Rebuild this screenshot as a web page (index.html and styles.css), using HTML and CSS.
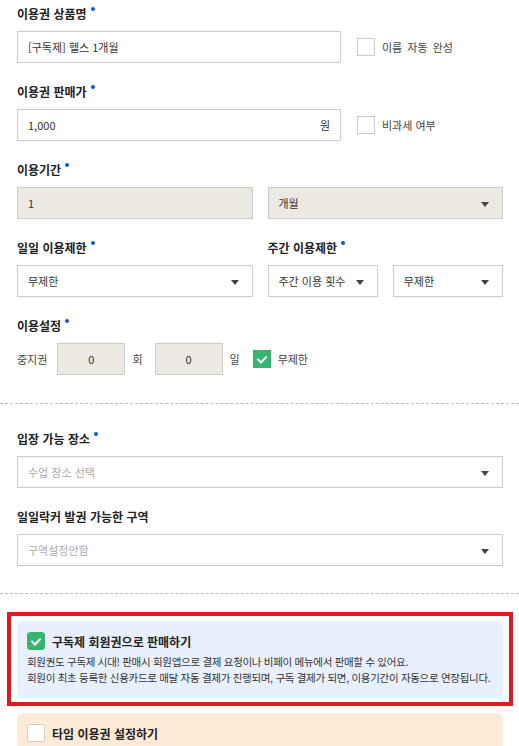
FILE: index.html
```html
<!DOCTYPE html>
<html lang="ko">
<head>
    <meta charset="UTF-8">
    <meta name="viewport" content="width=device-width, initial-scale=1.0">
    <title>이용권 설정</title>
    <link rel="stylesheet" href="styles.css">
</head>
<body>
    <form class="ticket-form">
        <div class="field">
            <label class="field-label">이용권 상품명<span class="req"></span></label>
            <div class="row-split">
                <input class="text-input" type="text" value="[구독제] 헬스 1개월">
                <label class="check wide"><span class="box"></span>이름 자동 완성</label>
            </div>
        </div>

        <div class="field">
            <label class="field-label">이용권 판매가<span class="req"></span></label>
            <div class="row-split">
                <div class="text-input price">
                    <span>1,000</span>
                    <span>원</span>
                </div>
                <label class="check"><span class="box"></span>비과세 여부</label>
            </div>
        </div>

        <div class="field">
            <label class="field-label">이용기간<span class="req"></span></label>
            <div class="row-half">
                <div class="text-input disabled">1</div>
                <div class="select disabled">개월<span class="caret"></span></div>
            </div>
        </div>

        <div class="row-half">
            <div class="field">
                <label class="field-label">일일 이용제한<span class="req"></span></label>
                <div class="select">무제한<span class="caret"></span></div>
            </div>
            <div class="field">
                <label class="field-label">주간 이용제한<span class="req"></span></label>
                <div class="row-half">
                    <div class="select">주간 이용 횟수<span class="caret"></span></div>
                    <div class="select">무제한<span class="caret"></span></div>
                </div>
            </div>
        </div>

        <div class="field">
            <label class="field-label">이용설정<span class="req"></span></label>
            <div class="usage-row">
                <span class="usage-name">중지권</span>
                <div class="num-input">0</div>
                <span class="unit">회</span>
                <div class="num-input">0</div>
                <span class="unit">일</span>
                <label class="check"><span class="box on"></span>무제한</label>
            </div>
        </div>

        <hr class="divider">

        <div class="field">
            <label class="field-label">입장 가능 장소<span class="req"></span></label>
            <div class="select placeholder">수업 장소 선택<span class="caret"></span></div>
        </div>

        <div class="field">
            <label class="field-label">일일락커 발권 가능한 구역</label>
            <div class="select placeholder">구역설정안함<span class="caret"></span></div>
        </div>

        <hr class="divider last">

        <div class="option-box blue highlighted">
            <label class="option-title"><span class="box on big"></span>구독제 회원권으로 판매하기</label>
            <p class="option-desc">
                회원권도 구독제 시대! 판매시 회원앱으로 결제 요청이나 비페이 메뉴에서 판매할 수 있어요.<br>
                회원이 최초 등록한 신용카드로 매달 자동 결제가 진행되며, 구독 결제가 되면, 이용기간이 자동으로 연장됩니다.
            </p>
        </div>

        <div class="option-box orange">
            <label class="option-title"><span class="box big"></span>타임 이용권 설정하기</label>
        </div>
    </form>
</body>
</html>
```

FILE: styles.css
```css
body {
    margin: 0;
    font-family: "Noto Sans CJK KR", "Noto Sans", sans-serif;
    background-color: #fff;
    color: #222;
}
.ticket-form {
    padding: 5px 16px 40px 17px;
}
.field {
    margin-bottom: 20px;
}
.field-label {
    display: block;
    height: 18px;
    line-height: 18px;
    margin-bottom: 8px;
    font-size: 12px;
    font-weight: 700;
    color: #222;
}
.req {
    display: inline-block;
    width: 4px;
    height: 4px;
    margin-left: 4px;
    border-radius: 50%;
    background-color: #0a55f0;
    vertical-align: top;
    margin-top: 2px;
}
.row-split {
    display: flex;
    align-items: center;
}
.row-split .text-input {
    width: 324px;
    flex: none;
}
.row-split .check {
    margin-left: 16px;
}
.row-half {
    display: grid;
    grid-template-columns: 1fr 1fr;
    gap: 15px;
}
.text-input, .select, .num-input {
    box-sizing: border-box;
    height: 32px;
    border: 1px solid #ccc;
    background-color: #fff;
    padding: 0 10px;
    font-family: inherit;
    font-size: 11px;
    color: #333;
    display: flex;
    align-items: center;
    white-space: nowrap;
    outline: none;
}
.price {
    justify-content: space-between;
}
.disabled, .num-input {
    background-color: #ebe9e2;
}
.select {
    position: relative;
    padding-right: 26px;
}
.placeholder {
    color: #aaa;
}
.caret {
    position: absolute;
    right: 13px;
    top: 14px;
    width: 0;
    height: 0;
    border-left: 4px solid transparent;
    border-right: 4px solid transparent;
    border-top: 5px solid #444;
}
.check {
    display: flex;
    align-items: center;
    font-size: 11px;
    color: #444;
}
.check.wide {
    word-spacing: 2px;
}
.box {
    box-sizing: border-box;
    width: 18px;
    height: 18px;
    border: 1px solid #ccc;
    background-color: #fff;
    margin-right: 7px;
    flex: none;
    position: relative;
}
.box.on {
    border-color: #37b56f;
    background-color: #37b56f;
}
.box.on::after {
    content: "";
    position: absolute;
    left: 5px;
    top: 3px;
    width: 4px;
    height: 7px;
    border: solid #fff;
    border-width: 0 2px 2px 0;
    transform: rotate(45deg);
}
.box.big {
    border-radius: 3px;
}
.usage-row {
    display: flex;
    align-items: center;
    margin-top: 2px;
    font-size: 11px;
    color: #444;
}
.usage-name {
    margin-right: 10px;
}
.num-input {
    width: 68px;
    justify-content: center;
}
.unit {
    margin: 0 12px 0 7px;
}
.usage-row .check {
    margin-left: 1px;
}
.divider {
    border: none;
    border-top: 1px dashed #bbb;
    margin: 28px -16px 26px -17px;
}
.divider.last {
    margin-top: 27px;
    margin-bottom: 27px;
}
.option-box {
    border-radius: 6px;
    padding: 11px 10px;
    margin-bottom: 16px;
}
.option-box.blue {
    background-color: #e9f0fd;
}
.option-box.orange {
    background-color: #fdebd8;
}
.highlighted {
    position: relative;
}
.highlighted::before {
    content: "";
    position: absolute;
    left: -10px;
    right: -10px;
    top: -9px;
    bottom: -9px;
    border: 4px solid #e3191f;
}
.option-title {
    display: flex;
    align-items: center;
    font-size: 12px;
    font-weight: 700;
    color: #222;
}
.option-desc {
    margin: 4px 0 0;
    font-size: 10.5px;
    line-height: 16px;
    color: #333;
    letter-spacing: -0.3px;
}
```
